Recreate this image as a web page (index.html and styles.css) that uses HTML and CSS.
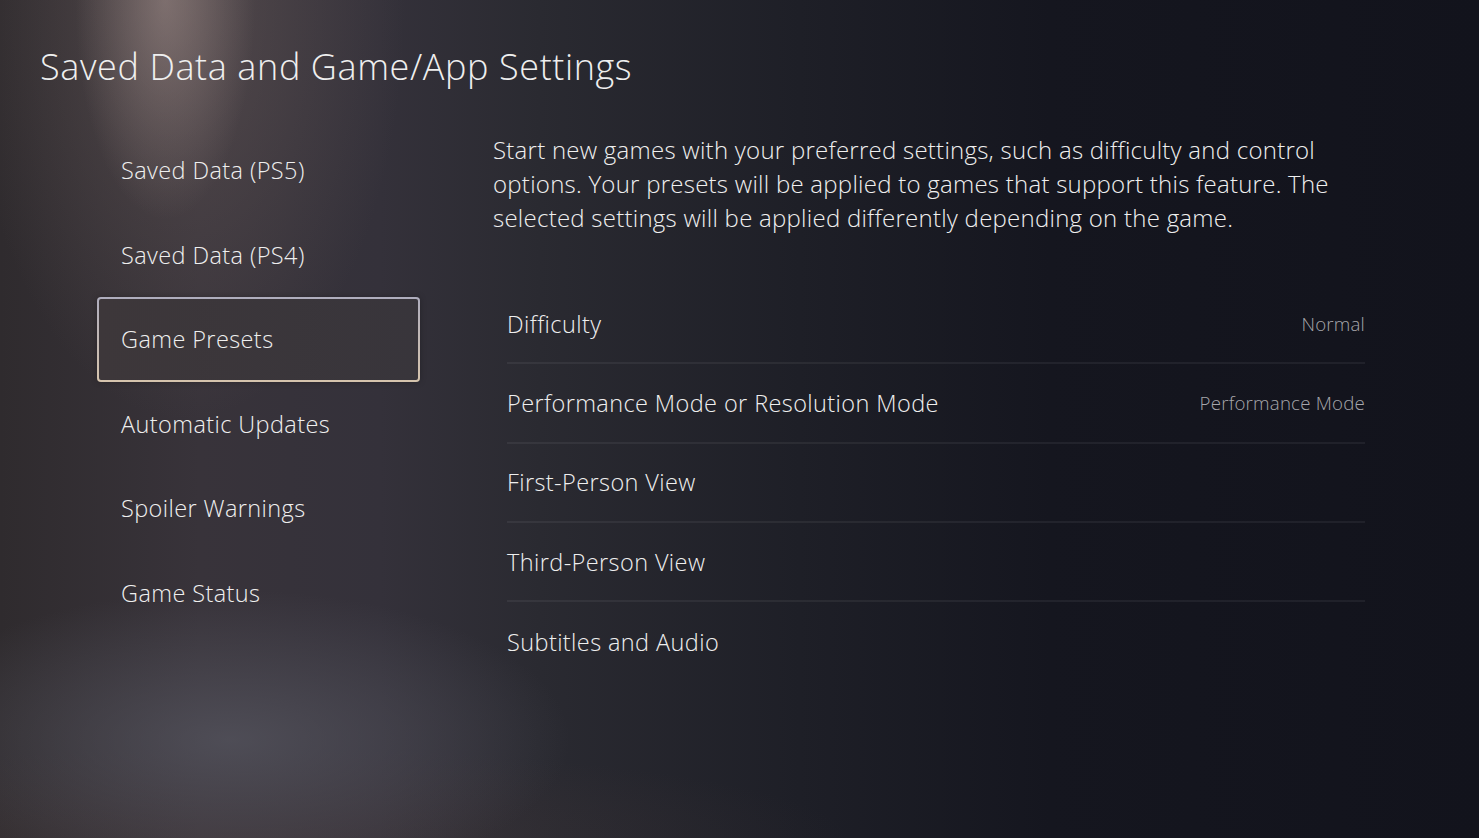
FILE: index.html
```html
<!DOCTYPE html>
<html>
	<head>
		<meta charset="UTF-8">
		<title>Saved Data and Game/App Settings</title>
		<link rel="stylesheet" href="styles.css">
	</head>
	<body>
		<section id="wrap">
			<h1 class="title">Saved Data and Game/App Settings</h1>
			<section class="main">
				<ul class="menu">
					<li>Saved Data (PS5)</li>
					<li>Saved Data (PS4)</li>
					<li class="active">Game Presets</li>
					<li>Automatic Updates</li>
					<li>Spoiler Warnings</li>
					<li>Game Status</li>
				</ul>
				<div class="content">
					<p class="desc">Start new games with your preferred settings, such as difficulty and control options. Your presets will be applied to games that support this feature. The selected settings will be applied differently depending on the game.</p>
					<ul class="list">
						<li><span>Difficulty</span><em>Normal</em></li>
						<li><span>Performance Mode or Resolution Mode</span><em>Performance Mode</em></li>
						<li><span>First-Person View</span></li>
						<li><span>Third-Person View</span></li>
						<li><span>Subtitles and Audio</span></li>
					</ul>
				</div>
			</section>
		</section>
	</body>
</html>
```

FILE: styles.css
```css
html,body{
	margin: 0;
	height: 100%;
}
body{
	font-family: "Open Sans", "Noto Sans", sans-serif;
	font-weight: 300;
	color: #efefef;
	overflow: hidden;
	background:
		radial-gradient(ellipse 90px 220px at 165px 0, rgba(170,150,146,.5), rgba(0,0,0,0) 100%),
		radial-gradient(ellipse 220px 420px at 185px 0, rgba(110,96,94,.5), rgba(0,0,0,0) 100%),
		radial-gradient(ellipse 340px 150px at 230px 740px, rgba(88,88,98,.7), rgba(0,0,0,0) 100%),
		radial-gradient(ellipse 600px 90px at 250px 838px, rgba(72,58,58,.35), rgba(0,0,0,0) 100%),
		linear-gradient(90deg, #2f2b2e 0, #38333a 200px, #34313a 380px, #2a2a31 540px, #1e1f27 800px, #15161f 1050px, #12131c 100%);
}
#wrap{
	padding: 0 40px;
}
.title{
	margin: 0;
	padding-top: 44px;
	font-size: 36px;
	font-weight: 300;
	line-height: 46px;
	letter-spacing: 0.6px;
}
.main{
	display: flex;
	margin-top: 38px;
}
.menu{
	list-style: none;
	margin: 0 0 0 57px;
	padding: 0;
	width: 323px;
}
.menu li{
	height: 84.5px;
	line-height: 84.5px;
	padding-left: 24px;
	font-size: 23.5px;
	letter-spacing: 0.4px;
	box-sizing: border-box;
}
.menu li.active{
	border: 2px solid transparent;
	border-radius: 4px;
	padding-left: 22px;
	line-height: 80.5px;
	background:
		linear-gradient(90deg, #3d373a, #38353b) padding-box,
		linear-gradient(#aeadbd, #d6c4ad) border-box;
	box-shadow: 0 0 6px rgba(0,0,0,.25);
}
.content{
	margin-left: 73px;
	width: 872px;
}
.desc{
	margin: 5px 0 0 0;
	font-size: 24px;
	line-height: 34px;
	letter-spacing: 0.25px;
}
.list{
	list-style: none;
	margin: 50px 0 0 14px;
	padding: 0;
}
.list li{
	display: flex;
	justify-content: space-between;
	align-items: center;
	height: 79.3px;
	border-bottom: 2px solid rgba(255,255,255,.06);
	box-sizing: border-box;
	font-size: 23.5px;
	letter-spacing: 0.4px;
}
.list li:last-child{
	border-bottom: none;
}
.list em{
	font-style: normal;
	font-size: 18.7px;
	letter-spacing: 0.2px;
	color: #a6a6ab;
}
```
